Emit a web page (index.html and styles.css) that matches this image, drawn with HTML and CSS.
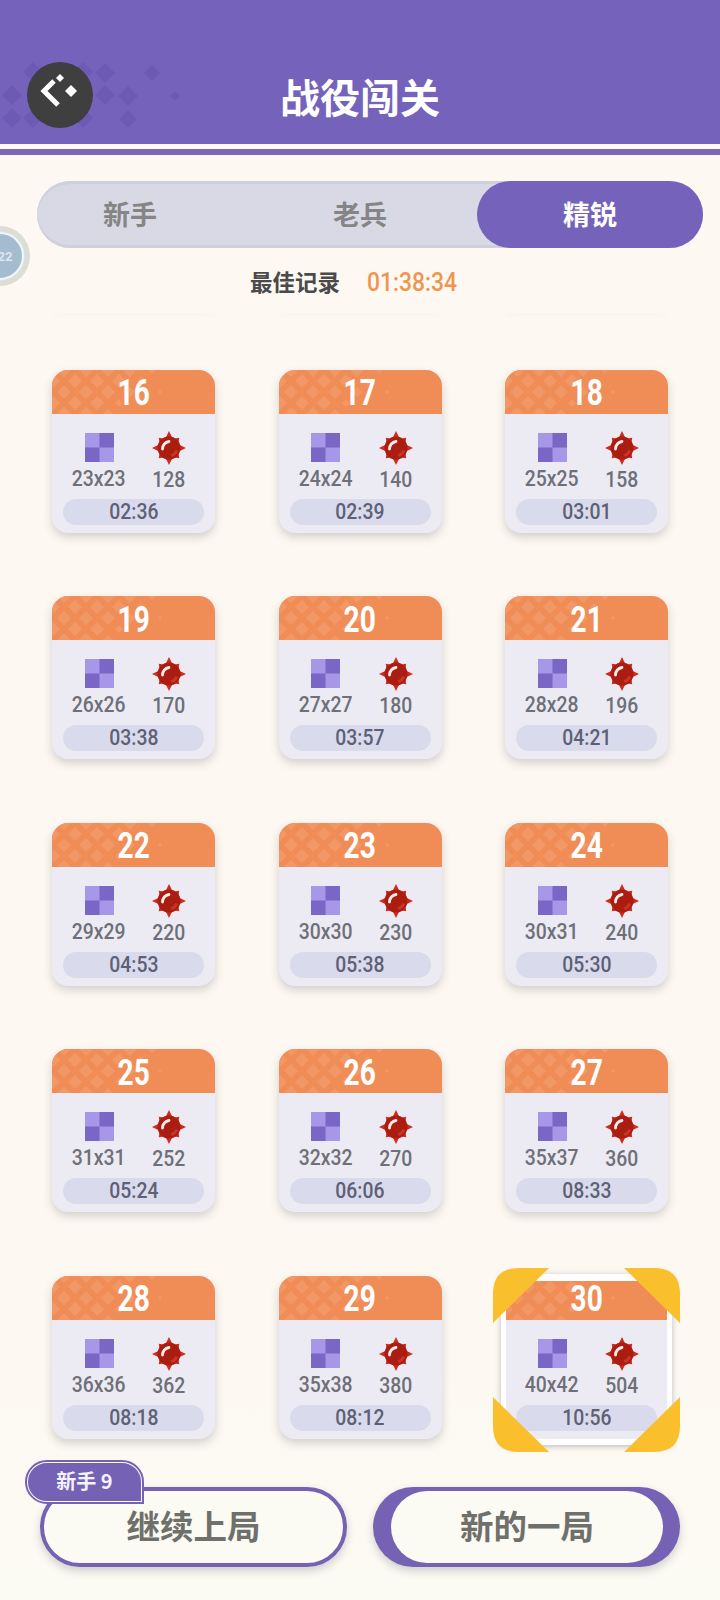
FILE: index.html
```html
<!DOCTYPE html>
<html lang="zh-CN">
<head>
<meta charset="utf-8">
<title>战役闯关</title>
<link rel="stylesheet" href="styles.css">
</head>
<body>
<svg class="defs" width="0" height="0" aria-hidden="true">
  <defs>
    <symbol id="grid" viewBox="0 0 29 29">
      <rect width="29" height="29" fill="#a797e8"/>
      <rect x="14.5" width="14.5" height="14.5" fill="#7a66c4"/>
      <rect y="14.5" width="14.5" height="14.5" fill="#7a66c4"/>
    </symbol>
    <symbol id="mine" viewBox="0 0 34 34">
      <polygon fill="#cf2a1e" points="17,0 20.8,7.8 27.25,6.75 26.2,13.2 34,17 26.2,20.8 27.25,27.25 20.8,26.2 17,34 13.2,26.2 6.75,27.25 7.8,20.8 0,17 7.8,13.2 6.75,6.75 13.2,7.8"/>
      <circle cx="17" cy="17" r="11.5" fill="#ab1d10"/>
      <path d="M20 26a9 9 0 0 0 6-6l-2.500-1a9 9 0 0 1-5 4.500z" fill="#c6352a"/>
      <path d="M10.500 18a7.500 7.500 0 0 1 6.500-7.500" fill="none" stroke="#fff" stroke-width="2.800" stroke-linecap="round" opacity=".92"/>
    </symbol>
    <symbol id="pattern" viewBox="0 0 112 44">
      <g fill="#f29766">
        <polygon points="12,-7 19,0 12,7 5,0"/><polygon points="34,-7 41,0 34,7 27,0"/><polygon points="56,-7 63,0 56,7 49,0"/><polygon points="78,-7 85,0 78,7 71,0"/><polygon points="100,-4 104,0 100,4 96,0"/>
        <polygon points="1,4 8,11 1,18 -6,11"/><polygon points="23,4 30,11 23,18 16,11"/><polygon points="45,4 52,11 45,18 38,11"/><polygon points="67,4 74,11 67,18 60,11"/><polygon points="89,7 93,11 89,15 85,11"/>
        <polygon points="12,15 19,22 12,29 5,22"/><polygon points="34,15 41,22 34,29 27,22"/><polygon points="56,15 63,22 56,29 49,22"/><polygon points="78,17 83,22 78,27 73,22"/><polygon points="108,20 110,22 108,24 106,22"/>
        <polygon points="1,26 8,33 1,40 -6,33"/><polygon points="23,26 30,33 23,40 16,33"/><polygon points="45,26 52,33 45,40 38,33"/><polygon points="67,29 71,33 67,37 63,33"/>
        <polygon points="12,37 19,44 12,51 5,44"/><polygon points="34,37 41,44 34,51 27,44"/><polygon points="56,39 61,44 56,49 51,44"/>
      </g>
    </symbol>
  </defs>
</svg>

<div class="app">
  <header class="top">
    <svg class="top-pattern" viewBox="0 0 190 70" width="190" height="70" aria-hidden="true">
      <g fill="#6d5ab5">
        <polygon points="33,0 43,10 33,20 23,10"/><polygon points="83,0 93,10 83,20 73,10"/><polygon points="105,1 115,11 105,21 95,11"/><polygon points="152,3 160,11 152,19 144,11"/>
        <polygon points="12,23 22,33 12,43 2,33"/><polygon points="105,23 115,33 105,43 95,33"/><polygon points="128,24 138,34 128,44 118,34"/><polygon points="175,29 180,34 175,39 170,34"/>
        <polygon points="12,46 22,56 12,66 2,56"/><polygon points="33,46 43,56 33,66 23,56"/><polygon points="83,46 93,56 83,66 73,56"/><polygon points="128,48 137,57 128,66 119,57"/>
      </g>
    </svg>
    <button class="back" type="button" aria-label="返回">
      <svg viewBox="0 0 66 66" width="66" height="66" aria-hidden="true">
        <path d="M27 19 17 29 31 43" fill="none" stroke="#fff" stroke-width="5"/>
        <polygon points="33,12 37,16 33,20 29,16" fill="#fff"/>
        <polygon points="44,23 50,29 44,35 38,29" fill="#fff"/>
      </svg>
    </button>
    <h1 class="title">战役闯关</h1>
  </header>
  <div class="rule"></div>

  <div class="avatar"><span class="avatar-core">22</span></div>

  <nav class="tabs">
    <div class="tab tab-a">新手</div>
    <div class="tab tab-b">老兵</div>
    <div class="tab tab-c">精锐</div>
  </nav>

  <div class="record"><span class="record-label">最佳记录</span><span class="record-time">01:38:34</span></div>

  <main class="scroll">
    <div class="levels">
      <div class="peek"></div><div class="peek"></div><div class="peek"></div>

      <article class="card"><div class="head"><svg class="head-bg"><use href="#pattern"/></svg><span class="num">16</span></div><div class="body"><div class="stats"><div class="stat"><svg class="ico"><use href="#grid"/></svg><span class="val">23x23</span></div><div class="stat"><svg class="ico-m"><use href="#mine"/></svg><span class="val">128</span></div></div><div class="pill"><span class="val">02:36</span></div></div></article>
      <article class="card"><div class="head"><svg class="head-bg"><use href="#pattern"/></svg><span class="num">17</span></div><div class="body"><div class="stats"><div class="stat"><svg class="ico"><use href="#grid"/></svg><span class="val">24x24</span></div><div class="stat"><svg class="ico-m"><use href="#mine"/></svg><span class="val">140</span></div></div><div class="pill"><span class="val">02:39</span></div></div></article>
      <article class="card"><div class="head"><svg class="head-bg"><use href="#pattern"/></svg><span class="num">18</span></div><div class="body"><div class="stats"><div class="stat"><svg class="ico"><use href="#grid"/></svg><span class="val">25x25</span></div><div class="stat"><svg class="ico-m"><use href="#mine"/></svg><span class="val">158</span></div></div><div class="pill"><span class="val">03:01</span></div></div></article>

      <article class="card"><div class="head"><svg class="head-bg"><use href="#pattern"/></svg><span class="num">19</span></div><div class="body"><div class="stats"><div class="stat"><svg class="ico"><use href="#grid"/></svg><span class="val">26x26</span></div><div class="stat"><svg class="ico-m"><use href="#mine"/></svg><span class="val">170</span></div></div><div class="pill"><span class="val">03:38</span></div></div></article>
      <article class="card"><div class="head"><svg class="head-bg"><use href="#pattern"/></svg><span class="num">20</span></div><div class="body"><div class="stats"><div class="stat"><svg class="ico"><use href="#grid"/></svg><span class="val">27x27</span></div><div class="stat"><svg class="ico-m"><use href="#mine"/></svg><span class="val">180</span></div></div><div class="pill"><span class="val">03:57</span></div></div></article>
      <article class="card"><div class="head"><svg class="head-bg"><use href="#pattern"/></svg><span class="num">21</span></div><div class="body"><div class="stats"><div class="stat"><svg class="ico"><use href="#grid"/></svg><span class="val">28x28</span></div><div class="stat"><svg class="ico-m"><use href="#mine"/></svg><span class="val">196</span></div></div><div class="pill"><span class="val">04:21</span></div></div></article>

      <article class="card"><div class="head"><svg class="head-bg"><use href="#pattern"/></svg><span class="num">22</span></div><div class="body"><div class="stats"><div class="stat"><svg class="ico"><use href="#grid"/></svg><span class="val">29x29</span></div><div class="stat"><svg class="ico-m"><use href="#mine"/></svg><span class="val">220</span></div></div><div class="pill"><span class="val">04:53</span></div></div></article>
      <article class="card"><div class="head"><svg class="head-bg"><use href="#pattern"/></svg><span class="num">23</span></div><div class="body"><div class="stats"><div class="stat"><svg class="ico"><use href="#grid"/></svg><span class="val">30x30</span></div><div class="stat"><svg class="ico-m"><use href="#mine"/></svg><span class="val">230</span></div></div><div class="pill"><span class="val">05:38</span></div></div></article>
      <article class="card"><div class="head"><svg class="head-bg"><use href="#pattern"/></svg><span class="num">24</span></div><div class="body"><div class="stats"><div class="stat"><svg class="ico"><use href="#grid"/></svg><span class="val">30x31</span></div><div class="stat"><svg class="ico-m"><use href="#mine"/></svg><span class="val">240</span></div></div><div class="pill"><span class="val">05:30</span></div></div></article>

      <article class="card"><div class="head"><svg class="head-bg"><use href="#pattern"/></svg><span class="num">25</span></div><div class="body"><div class="stats"><div class="stat"><svg class="ico"><use href="#grid"/></svg><span class="val">31x31</span></div><div class="stat"><svg class="ico-m"><use href="#mine"/></svg><span class="val">252</span></div></div><div class="pill"><span class="val">05:24</span></div></div></article>
      <article class="card"><div class="head"><svg class="head-bg"><use href="#pattern"/></svg><span class="num">26</span></div><div class="body"><div class="stats"><div class="stat"><svg class="ico"><use href="#grid"/></svg><span class="val">32x32</span></div><div class="stat"><svg class="ico-m"><use href="#mine"/></svg><span class="val">270</span></div></div><div class="pill"><span class="val">06:06</span></div></div></article>
      <article class="card"><div class="head"><svg class="head-bg"><use href="#pattern"/></svg><span class="num">27</span></div><div class="body"><div class="stats"><div class="stat"><svg class="ico"><use href="#grid"/></svg><span class="val">35x37</span></div><div class="stat"><svg class="ico-m"><use href="#mine"/></svg><span class="val">360</span></div></div><div class="pill"><span class="val">08:33</span></div></div></article>

      <article class="card"><div class="head"><svg class="head-bg"><use href="#pattern"/></svg><span class="num">28</span></div><div class="body"><div class="stats"><div class="stat"><svg class="ico"><use href="#grid"/></svg><span class="val">36x36</span></div><div class="stat"><svg class="ico-m"><use href="#mine"/></svg><span class="val">362</span></div></div><div class="pill"><span class="val">08:18</span></div></div></article>
      <article class="card"><div class="head"><svg class="head-bg"><use href="#pattern"/></svg><span class="num">29</span></div><div class="body"><div class="stats"><div class="stat"><svg class="ico"><use href="#grid"/></svg><span class="val">35x38</span></div><div class="stat"><svg class="ico-m"><use href="#mine"/></svg><span class="val">380</span></div></div><div class="pill"><span class="val">08:12</span></div></div></article>
      <article class="card selected"><div class="head"><svg class="head-bg"><use href="#pattern"/></svg><span class="num">30</span></div><div class="body"><div class="stats"><div class="stat"><svg class="ico"><use href="#grid"/></svg><span class="val">40x42</span></div><div class="stat"><svg class="ico-m"><use href="#mine"/></svg><span class="val">504</span></div></div><div class="pill"><span class="val">10:56</span></div></div>
        <div class="frame"></div>
        <svg class="corners" viewBox="0 0 187 184" width="187" height="184" aria-hidden="true">
          <g fill="#f9bf2c">
            <path d="M0 55V26Q0 0 26 0H56Z"/>
            <path d="M187 55V26Q187 0 161 0H131Z"/>
            <path d="M0 129V158Q0 184 26 184H56Z"/>
            <path d="M187 129V158Q187 184 161 184H131Z"/>
          </g>
        </svg>
      </article>
    </div>
  </main>

  <footer class="actions">
    <button class="action action-continue" type="button">
      <span class="badge">新手 9</span><span class="action-label">继续上局</span>
    </button>
    <button class="action action-new" type="button"><span class="action-inner"><span class="action-label">新的一局</span></span></button>
  </footer>
</div>
</body>
</html>
```

FILE: styles.css
```css
* { box-sizing: border-box; }
html, body { margin: 0; padding: 0; }
body {
  width: 720px;
  height: 1600px;
  overflow: hidden;
  background: #fdf9f2;
  font-family: "Noto Sans CJK SC", "Noto Sans", sans-serif;
}
.defs { position: absolute; }
.app {
  position: relative;
  height: 1600px;
  display: flex;
  flex-direction: column;
  background: linear-gradient(#fdf9f2 85%, #fbfaf3);
}

/* header */
.top {
  position: relative;
  height: 144px;
  background: #7562bb;
  display: flex;
  align-items: flex-end;
  justify-content: center;
  flex: none;
}
.top-pattern { position: absolute; left: 0; top: 62px; }
.back {
  position: absolute;
  left: 27px;
  top: 62px;
  width: 66px;
  height: 66px;
  padding: 0;
  border: 0;
  border-radius: 50%;
  background: #3f3f3f;
  display: flex;
}
.title {
  margin: 0 0 20px;
  color: #fff;
  font-size: 40px;
  line-height: 56px;
  font-weight: 700;
}
.rule {
  flex: none;
  height: 11px;
  border-top: 5px solid #fdf9f5;
  background: #7d68b5;
}

/* progress badge at the screen edge */
.avatar {
  position: absolute;
  left: -30px;
  top: 226px;
  width: 60px;
  height: 60px;
  border-radius: 50%;
  background: #dedcd3;
  display: flex;
  align-items: center;
  justify-content: center;
}
.avatar-core {
  width: 48px;
  height: 48px;
  border-radius: 50%;
  background: #a5bbd0;
  border: 2px solid #f1f8fc;
  box-shadow: 0 0 0 1px #cfe4f2;
  display: flex;
  align-items: center;
  justify-content: center;
  padding-left: 10px;
  color: #dfe6ec;
  font-family: Roboto, sans-serif;
  font-size: 13px;
  font-weight: 700;
}

/* tabs */
.tabs {
  flex: none;
  margin: 26px 17px 0 37px;
  height: 67px;
  border-radius: 34px;
  background: #d9d9e6;
  box-shadow: inset 0 3px 0 #cfcfde, inset 0 -3px 0 #cfcfde;
  display: flex;
  font-size: 27px;
  font-weight: 700;
  color: #858585;
  line-height: 65px;
  text-align: center;
}
.tab-a { width: 186px; }
.tab-b { width: 254px; padding-left: 20px; }
.tab-c {
  width: 226px;
  border-radius: 34px;
  background: #7562bb;
  color: #fff;
}

/* record */
.record {
  flex: none;
  height: 65px;
  padding-left: 250px;
  display: flex;
  align-items: center;
  gap: 27px;
}
.record-label { font-size: 22.5px; font-weight: 700; color: #4a4a4a; }
.record-time {
  display: inline-block;
  padding-top: 2px;
  font-family: Roboto, sans-serif;
  font-size: 26px;
  font-weight: 500;
  color: #ee9650;
  transform: scaleX(.88);
  transform-origin: left center;
}

/* level grid */
.scroll {
  flex: 1;
  min-height: 0;
  overflow: hidden;
}
.levels {
  margin-top: -8px;
  padding-left: 52px;
  display: grid;
  grid-template-columns: repeat(3, 163px);
  column-gap: 63.5px;
  row-gap: 63.5px;
}
.peek {
  height: 1px;
  border-radius: 16px;
  box-shadow: 0 6px 10px rgba(70, 60, 40, .16);
}
.card {
  position: relative;
  height: 163px;
  border-radius: 16px;
  background: #ecebf3;
  box-shadow: 0 4px 10px rgba(60, 55, 70, .22);
}
.head {
  position: relative;
  height: 44px;
  border-radius: 16px 16px 0 0;
  background: #f08d56;
  overflow: hidden;
  display: flex;
  align-items: center;
  justify-content: center;
}
.head-bg {
  position: absolute;
  left: 0;
  top: 0;
  width: 112px;
  height: 44px;
}
.num {
  position: relative;
  display: inline-block;
  padding-top: 3px;
  color: #fff;
  font-family: Roboto, sans-serif;
  font-size: 36px;
  line-height: 44px;
  font-weight: 700;
  transform: scaleX(.78);
}
.body { padding: 19px 11px 0; }
.stats {
  display: grid;
  grid-template-columns: 72px 68px;
  height: 66px;
}
.stat {
  display: flex;
  flex-direction: column;
  align-items: center;
  color: #6e6f78;
  font-family: Roboto, sans-serif;
  font-size: 22px;
  font-weight: 500;
  line-height: 30px;
  padding-top: 0;
}
.val {
  display: inline-block;
  transform: scaleX(.88);
}
.stat .val { position: relative; top: 1px; white-space: nowrap; }
.ico { width: 29px; height: 29px; flex: none; margin-bottom: 1px; }
.ico-m { width: 34px; height: 34px; flex: none; margin: -2px 0 -1px; }
.pill {
  height: 26px;
  border-radius: 13px;
  background: #d9dbec;
  color: #5e6075;
  font-family: Roboto, sans-serif;
  font-size: 22px;
  font-weight: 500;
  line-height: 26px;
  text-align: center;
}
.frame {
  position: absolute;
  left: -4px;
  right: -4px;
  top: -2px;
  bottom: -6px;
  border: solid #fff;
  border-width: 7px 5px 6px;
  box-shadow: 0 1px 6px rgba(60, 55, 70, .25);
}
.corners {
  position: absolute;
  left: -12px;
  top: -8px;
}

/* bottom actions */
.actions {
  flex: none;
  height: 130px;
  padding: 17px 40px 33px;
  display: flex;
  justify-content: space-between;
  align-items: flex-start;
}
.action {
  position: relative;
  width: 307px;
  height: 80px;
  padding: 0;
  border-radius: 40px;
  color: #6f6f6b;
  font-family: inherit;
  font-size: 33.5px;
  font-weight: 700;
  box-shadow: 0 4px 8px rgba(60, 55, 70, .22);
}
.action-label { display: block; padding-bottom: 5px; }
.action-continue {
  border: 4px solid #7562b5;
  background: #fbfaf3;
}
.action-new {
  border: 0;
  background: #7562b5;
  display: flex;
  align-items: center;
  justify-content: flex-end;
  padding-right: 17px;
}
.action-inner {
  width: 272px;
  height: 72px;
  border-radius: 36px;
  background: #fbfaf3;
  display: flex;
  align-items: center;
  justify-content: center;
}
.badge {
  position: absolute;
  left: -18px;
  top: -30px;
  width: 117px;
  height: 42px;
  border-radius: 21px 21px 0 21px;
  background: #7562b5;
  border: 2px solid #fbfaf3;
  outline: 2px solid #7562b5;
  outline-offset: -1px;
  color: #f4f2fa;
  font-size: 20px;
  font-weight: 700;
  line-height: 36px;
  text-align: center;
}
```
